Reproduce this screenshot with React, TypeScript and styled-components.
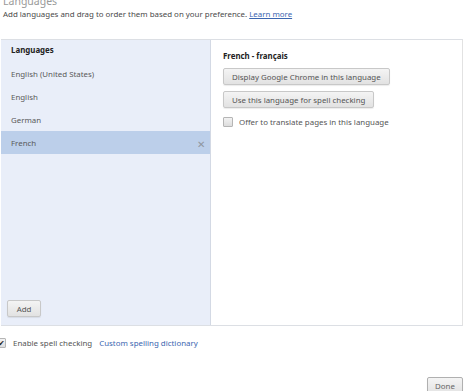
import React from "react";
import styled, { createGlobalStyle } from "styled-components";

const FS = "7.9px";

const Global = createGlobalStyle`
  html, body { margin: 0; padding: 0; background: #ffffff; }
  body { font-family: "Noto Sans", "Open Sans", sans-serif; overflow: hidden; }
`;

const Page = styled.div`
  width: 466px;
  height: 391px;
  display: flex;
  flex-direction: column;
  overflow: hidden;
`;

const Title = styled.div`
  font-size: 10.5px;
  line-height: 12px;
  color: #9a9a9a;
  margin: -5px 0 0 3px;
`;

const Intro = styled.div`
  font-size: ${FS};
  line-height: 12px;
  color: #4a4a4a;
  margin: 1px 0 0 3px;
`;

const Link = styled.a`
  color: #3b66b0;
  text-decoration: underline;
  cursor: pointer;
`;

const PlainLink = styled.a`
  color: #3b66b0;
  cursor: pointer;
`;

const Panels = styled.div`
  display: flex;
  margin: 19px 0 0 1px;
  width: 462px;
  height: 287px;
  flex-shrink: 0;
  border-top: 1px solid #dcdfe4;
  border-bottom: 1px solid #dcdfe4;
  border-right: 1px solid #e2e2e2;
  box-sizing: border-box;
`;

const LeftPane = styled.div`
  width: 210px;
  background: #e9eef9;
  border-right: 1px solid #d3d9e4;
  display: flex;
  flex-direction: column;
  box-sizing: border-box;
`;

const PaneHeader = styled.div`
  font-size: ${FS};
  font-weight: 700;
  color: #222;
  height: 22px;
  line-height: 20px;
  padding-left: 10px;
`;

const Row = styled.div<{ $selected?: boolean }>`
  height: 23px;
  display: flex;
  align-items: center;
  justify-content: space-between;
  padding: 0 5px 0 10px;
  font-size: ${FS};
  color: #5a5a5a;
  background: ${(p) => (p.$selected ? "#bccfea" : "transparent")};
`;

const Close = styled.span`
  color: #8f96a0;
  font-size: 10px;
  line-height: 1;
  margin-top: 3px;
`;

const Spacer = styled.div`
  flex: 1;
`;

const Button = styled.button`
  font-family: inherit;
  font-size: ${FS};
  color: #555;
  background: linear-gradient(#f4f4f4, #e2e2e2);
  border: 1px solid #c8c8c8;
  border-radius: 2px;
  padding: 0 8px;
  height: 17px;
  box-shadow: 0 1px 1px rgba(0, 0, 0, 0.08);
  align-self: flex-start;
`;

const AddButton = styled(Button)`
  width: 34px;
  padding: 0;
  margin: 0 0 8px 6px;
`;

const RightPane = styled.div`
  flex: 1;
  padding: 10px 0 0 12px;
  display: flex;
  flex-direction: column;
  gap: 6px;
`;

const LangName = styled.div`
  font-size: ${FS};
  font-weight: 700;
  color: #222;
  line-height: 12px;
`;

const CheckRow = styled.label`
  display: flex;
  align-items: center;
  gap: 6px;
  font-size: ${FS};
  color: #555;
  margin-top: 3px;
`;

const Box = styled.span`
  width: 8px;
  height: 8px;
  border: 1px solid #b5b5b5;
  border-radius: 1px;
  background: linear-gradient(#f2f2f2, #ddd);
  display: inline-flex;
  align-items: center;
  justify-content: center;
  font-size: 8px;
  color: #222;
  line-height: 1;
  flex-shrink: 0;
`;

const SpellRow = styled.div`
  display: flex;
  align-items: center;
  gap: 7px;
  font-size: ${FS};
  color: #555;
  margin: 12px 0 0 -4px;
`;

const Footer = styled.div`
  display: flex;
  justify-content: flex-end;
  margin: 29px 3px 0 0;
`;

const DoneButton = styled(Button)`
  width: 36px;
  height: 18px;
  padding: 0;
  color: #666;
  border-color: #b0b0b0;
`;

const languages = ["English (United States)", "English", "German", "French"];

export default function App() {
  return (
    <Page>
      <Global />
      <Title>Languages</Title>
      <Intro>
        Add languages and drag to order them based on your preference. <Link>Learn more</Link>
      </Intro>
      <Panels>
        <LeftPane>
          <PaneHeader>Languages</PaneHeader>
          {languages.map((l) => (
            <Row key={l} $selected={l === "French"}>
              <span>{l}</span>
              {l === "French" && <Close>✕</Close>}
            </Row>
          ))}
          <Spacer />
          <AddButton>Add</AddButton>
        </LeftPane>
        <RightPane>
          <LangName>French - français</LangName>
          <Button>Display Google Chrome in this language</Button>
          <Button>Use this language for spell checking</Button>
          <CheckRow>
            <Box />
            Offer to translate pages in this language
          </CheckRow>
        </RightPane>
      </Panels>
      <SpellRow>
        <Box>✔</Box>
        <span>Enable spell checking</span>
        <PlainLink>Custom spelling dictionary</PlainLink>
      </SpellRow>
      <Footer>
        <DoneButton>Done</DoneButton>
      </Footer>
    </Page>
  );
}
